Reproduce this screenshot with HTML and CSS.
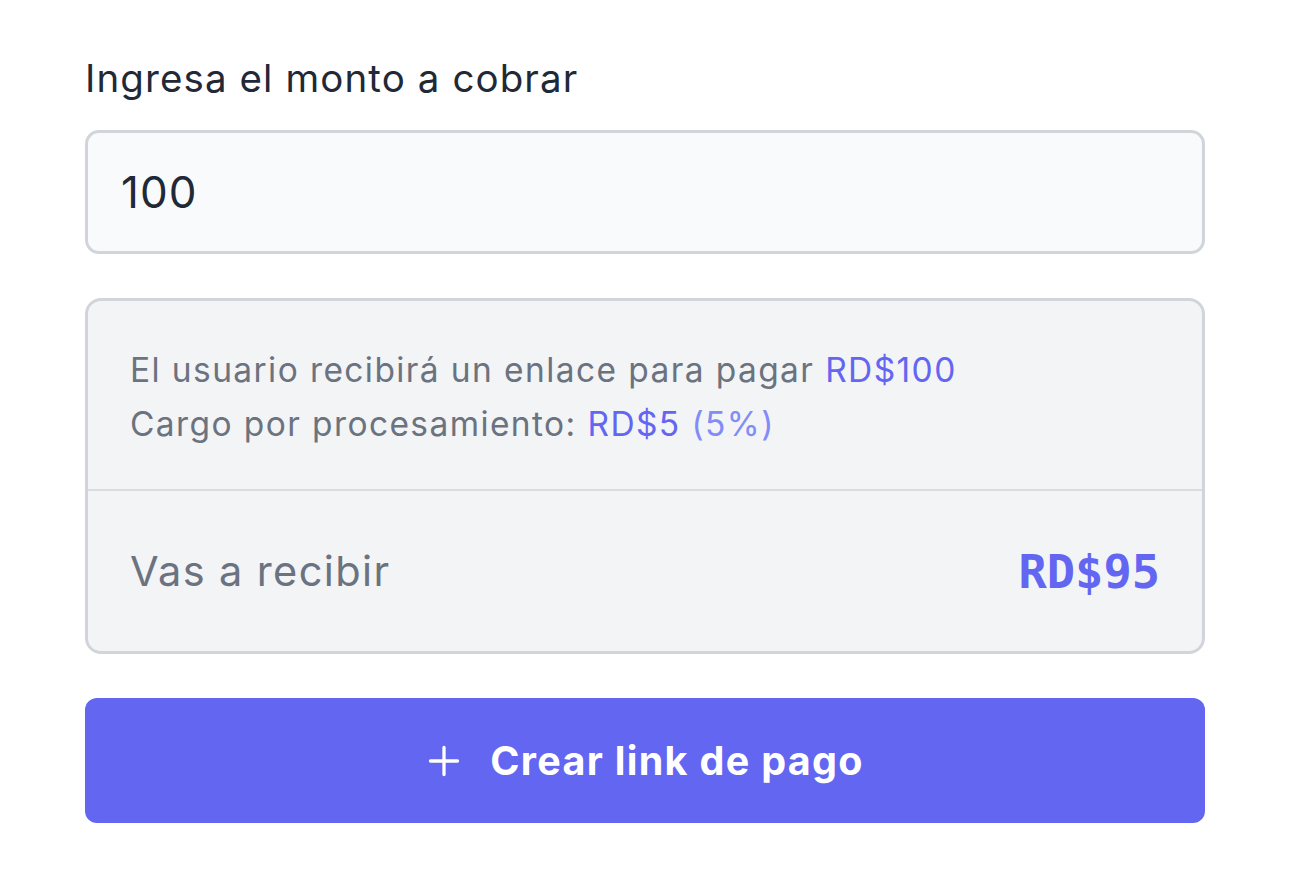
FILE: index.html
```html
<!DOCTYPE html>
<html lang="es">
<head>
    <meta charset="UTF-8">
    <meta name="viewport" content="width=device-width, initial-scale=1.0">
    <title>Crear link de pago</title>
    <link rel="stylesheet" href="styles.css">
</head>
<body>
    <div class="form">
        <label class="label" for="amount">Ingresa el monto a cobrar</label>
        <input class="amount" id="amount" type="text" value="100">

        <div class="summary">
            <div class="details">
                <p>El usuario recibirá un enlace para pagar <span class="accent">RD$100</span></p>
                <p>Cargo por procesamiento: <span class="accent">RD$5</span> <span class="accent light">(5%)</span></p>
            </div>
            <div class="total">
                <span>Vas a recibir</span>
                <span class="total-value">RD$95</span>
            </div>
        </div>

        <button class="submit">
            <svg width="36" height="36" viewBox="0 0 24 24" fill="none" stroke="currentColor" stroke-width="2.2" stroke-linecap="round">
                <path d="M12 3v18M3 12h18"/>
            </svg>
            <span>Crear link de pago</span>
        </button>
    </div>
</body>
</html>
```

FILE: styles.css
```css
* {
    box-sizing: border-box;
    margin: 0;
    padding: 0;
}

body {
    font-family: Inter, 'Noto Sans', sans-serif;
    background-color: #ffffff;
    color: #1f2937;
}

.form {
    width: 1120px;
    margin-left: 85px;
    padding-top: 52px;
    display: flex;
    flex-direction: column;
}

.label {
    font-size: 38.5px;
    line-height: 52px;
    letter-spacing: 1.1px;
    color: #1f2937;
    margin-bottom: 26px;
}

.amount {
    height: 124px;
    border: 3px solid #d1d5db;
    border-radius: 14px;
    background-color: #f9fafb;
    padding: 0 33px;
    font-family: inherit;
    font-size: 44px;
    letter-spacing: 1px;
    color: #1f2937;
    outline: none;
}

.summary {
    margin-top: 44px;
    border: 3px solid #d1d5db;
    border-radius: 16px;
    background-color: #f3f4f6;
}

.details {
    padding: 42px 42px 38px;
    border-bottom: 2px solid #d9dce1;
    font-size: 33.5px;
    line-height: 54px;
    letter-spacing: 1.4px;
    color: #6b7280;
}

.accent {
    color: #6366f1;
}

.accent.light {
    color: #818cf8;
}

.total {
    height: 160px;
    padding: 0 42px;
    display: flex;
    align-items: center;
    justify-content: space-between;
    font-size: 41.5px;
    letter-spacing: 1.4px;
    color: #6b7280;
}

.total-value {
    font-family: 'DejaVu Sans Mono', monospace;
    font-weight: 600;
    font-size: 47px;
    letter-spacing: 0;
    color: #6366f1;
}

.submit {
    margin-top: 44px;
    height: 125px;
    border: none;
    border-radius: 12px;
    background-color: #6366f1;
    color: #ffffff;
    font-family: inherit;
    font-size: 39.5px;
    font-weight: 700;
    letter-spacing: 1.3px;
    display: flex;
    align-items: center;
    justify-content: center;
    gap: 28px;
    cursor: pointer;
}
```
